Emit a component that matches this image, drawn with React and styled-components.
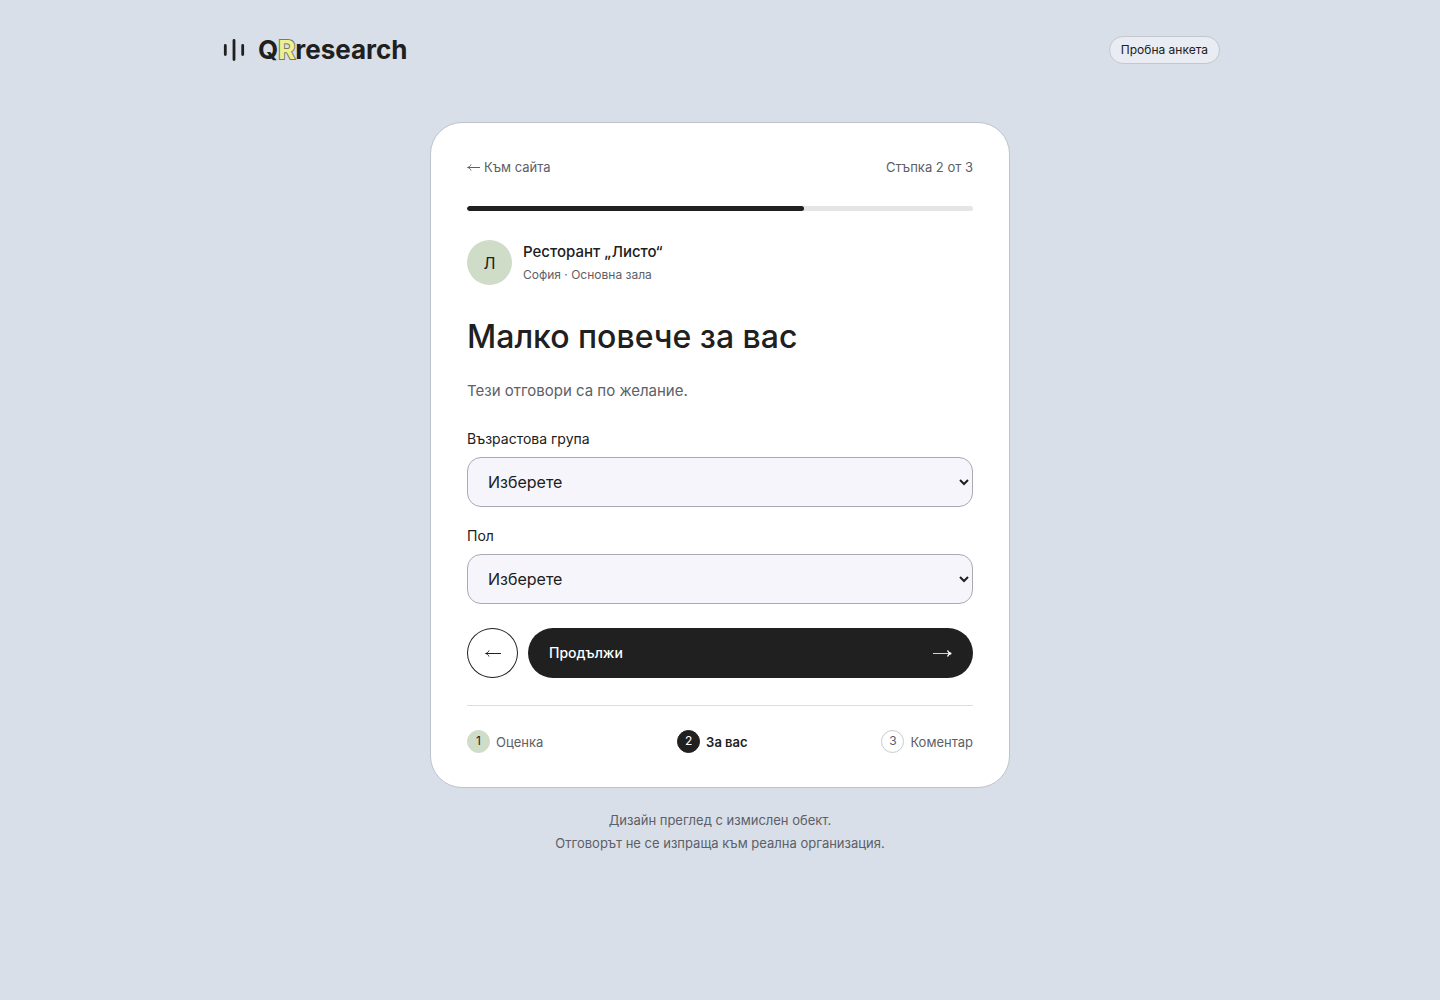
import { useState } from "react";
import styled, { createGlobalStyle } from "styled-components";

const GlobalStyle = createGlobalStyle`
  * {
    box-sizing: border-box;
  }
  body {
    margin: 0;
    background: #d8dfe9;
    color: #202020;
    font-family: Inter, "Liberation Sans", sans-serif;
    font-size: 16px;
  }
  button, select {
    font-family: inherit;
  }
`;

const Header = styled.header`
  display: flex;
  align-items: center;
  justify-content: space-between;
  max-width: 1000px;
  min-height: 100px;
  margin: 0 auto;
`;
const Logo = styled.a`
  display: flex;
  align-items: center;
  gap: 10px;
  color: #202020;
  font-size: 26px;
  font-weight: 700;
  line-height: 32px;
  text-decoration: none;
`;
const LogoLetter = styled.span`
  color: #f1f08f;
  -webkit-text-stroke: 2px #77785f;
  paint-order: stroke fill;
`;
const Badge = styled.span`
  padding: 5px 11px;
  border: 1px solid #c3c8d0;
  border-radius: 14px;
  background: #e9ecf2;
  font-size: 12px;
  line-height: 16px;
`;
const Card = styled.main`
  max-width: 580px;
  margin: 22px auto 0;
  padding: 36px 36px 34px;
  border: 1px solid #bdc4cd;
  border-radius: 32px;
  background: #ffffff;
`;
const TopLine = styled.div`
  display: flex;
  align-items: center;
  justify-content: space-between;
  color: #5d6067;
  font-size: 13px;
  line-height: 16px;
`;
const BackLink = styled.a`
  display: flex;
  align-items: center;
  gap: 4px;
  color: inherit;
  text-decoration: none;
`;
const Track = styled.div`
  height: 5px;
  margin-top: 31px;
  border-radius: 5px;
  background: #e5e5e5;
  overflow: hidden;
`;
const Bar = styled.div`
  height: 100%;
  border-radius: 5px;
  background: #202020;
`;
const Place = styled.div`
  display: flex;
  align-items: center;
  gap: 11px;
  margin-top: 29px;
`;
const Avatar = styled.div`
  display: flex;
  align-items: center;
  justify-content: center;
  width: 45px;
  height: 45px;
  border-radius: 50%;
  background: #cedcc8;
  font-size: 16px;
`;
const PlaceName = styled.div`
  font-size: 15px;
  font-weight: 500;
  line-height: 24px;
`;
const PlaceDetails = styled.div`
  color: #5d6067;
  font-size: 12px;
  line-height: 21px;
`;
const Title = styled.h1`
  margin: 32px 0 0;
  font-size: 32px;
  font-weight: 500;
  line-height: 40px;
`;
const Intro = styled.p`
  margin: 22px 0 26px;
  color: #5d6067;
  font-size: 15px;
  line-height: 24px;
`;
const Form = styled.form`
  display: flex;
  flex-direction: column;
  gap: 19px;
`;
const Field = styled.div`
  display: flex;
  flex-direction: column;
  gap: 8px;
`;
const Label = styled.label`
  font-size: 14px;
  line-height: 20px;
`;
const Select = styled.select`
  width: 100%;
  height: 50px;
  padding: 0 0 0 16px;
  border: 1px solid #a9abb2;
  border-radius: 14px;
  background: #f5f5fb;
  color: #202020;
  font-size: 16px;
`;
const Actions = styled.div`
  display: flex;
  gap: 10px;
  margin-top: 5px;
`;
const RoundButton = styled.button`
  display: flex;
  align-items: center;
  justify-content: center;
  width: 51px;
  height: 50px;
  padding: 0;
  border: 1px solid #202020;
  border-radius: 50%;
  background: #ffffff;
  color: #202020;
`;
const NextButton = styled.button`
  display: flex;
  flex: 1;
  align-items: center;
  justify-content: space-between;
  height: 50px;
  padding: 0 21px 2px;
  border: 0;
  border-radius: 25px;
  background: #202020;
  color: #ffffff;
  font-size: 14px;
  font-weight: 500;
`;
const Steps = styled.ol`
  display: flex;
  justify-content: space-between;
  margin: 27px 0 0;
  padding: 24px 0 0;
  border-top: 1px solid #dcdddf;
  list-style: none;
`;
const Step = styled.li`
  display: flex;
  align-items: center;
  gap: 6px;
  color: ${(props) => (props.$state === "current" ? "#202020" : "#5d6067")};
  font-size: 13px;
  font-weight: ${(props) => (props.$state === "current" ? 600 : 400)};
  line-height: 22px;
`;
const circleColors = {
  done: "#cedcc8",
  current: "#202020",
  next: "#ffffff",
};
const StepNumber = styled.span`
  display: flex;
  align-items: center;
  justify-content: center;
  width: 23px;
  height: 23px;
  padding-bottom: 2px;
  border: 1px solid ${(props) => (props.$state === "next" ? "#c9cacd" : circleColors[props.$state])};
  border-radius: 50%;
  background: ${(props) => circleColors[props.$state]};
  color: ${(props) => (props.$state === "current" ? "#ffffff" : props.$state === "done" ? "#202020" : "#5d6067")};
  font-size: 12px;
  font-weight: 400;
`;
const Footer = styled.footer`
  padding: 21px 20px;
  color: #5d6067;
  font-size: 13px;
  line-height: 23px;
  text-align: center;
`;

const LogoMark = () => (
  <svg width="28" height="24" viewBox="0 0 28 24" fill="none" stroke="#202020" strokeWidth="2.8" strokeLinecap="round" aria-hidden="true">
    <path d="M5.3 7.5v9M14 2.5v19M22.7 7.5v9" />
  </svg>
);

const ArrowLeft = ({ width }) => (
  <svg width={width} height="10" viewBox={`0 0 ${width} 10`} fill="none" stroke="currentColor" aria-hidden="true">
    <path d={`M1 5.5h${width - 1}`} strokeWidth="1" />
    <path d="M4 2.5C3.4 4.1 2.2 5.2.5 5.5c1.7.3 2.9 1.4 3.5 3" strokeWidth="1" />
  </svg>
);

const ArrowRight = () => (
  <svg width="19" height="12" viewBox="0 0 19 12" fill="none" stroke="currentColor" aria-hidden="true">
    <path d="M0 7.5h18" strokeWidth="1" strokeOpacity="0.8" />
    <path d="M14.5 4.5c.6 1.6 1.9 2.7 3.8 3-1.9.3-3.2 1.4-3.8 3" strokeWidth="1.3" />
  </svg>
);

const steps = [
  { title: "Оценка", state: "done" },
  { title: "За вас", state: "current" },
  { title: "Коментар", state: "next" },
];

const ages = ["Под 18", "18–24", "25–34", "35–44", "45–54", "55+"];
const genders = ["Жена", "Мъж", "Друго"];

const SelectField = ({ id, label, options }) => {
  const [value, setValue] = useState("");
  return (
    <Field>
      <Label htmlFor={id}>{label}</Label>
      <Select id={id} value={value} onChange={(e) => setValue(e.target.value)}>
        <option value="">Изберете</option>
        {options.map((option) => (
          <option key={option} value={option}>{option}</option>
        ))}
      </Select>
    </Field>
  );
};

const App = () => {
  const step = 2;
  return (
    <>
      <GlobalStyle />
      <Header>
        <Logo href="#">
          <LogoMark />
          <span>Q<LogoLetter>R</LogoLetter>research</span>
        </Logo>
        <Badge>Пробна анкета</Badge>
      </Header>
      <Card>
        <TopLine>
          <BackLink href="#"><ArrowLeft width={13} />Към сайта</BackLink>
          <span>Стъпка {step} от {steps.length}</span>
        </TopLine>
        <Track>
          <Bar style={{ width: `${(step / steps.length) * 100}%` }} />
        </Track>
        <Place>
          <Avatar>Л</Avatar>
          <div>
            <PlaceName>Ресторант „Листо“</PlaceName>
            <PlaceDetails>София · Основна зала</PlaceDetails>
          </div>
        </Place>
        <Title>Малко повече за вас</Title>
        <Intro>Тези отговори са по желание.</Intro>
        <Form onSubmit={(e) => e.preventDefault()}>
          <SelectField id="age" label="Възрастова група" options={ages} />
          <SelectField id="gender" label="Пол" options={genders} />
          <Actions>
            <RoundButton type="button" aria-label="Назад"><ArrowLeft width={16} /></RoundButton>
            <NextButton type="submit">Продължи<ArrowRight /></NextButton>
          </Actions>
        </Form>
        <Steps>
          {steps.map((item, i) => (
            <Step key={item.title} $state={item.state}>
              <StepNumber $state={item.state}>{i + 1}</StepNumber>
              {item.title}
            </Step>
          ))}
        </Steps>
      </Card>
      <Footer>
        Дизайн преглед с измислен обект.<br />
        Отговорът не се изпраща към реална организация.
      </Footer>
    </>
  );
};

export default App;
